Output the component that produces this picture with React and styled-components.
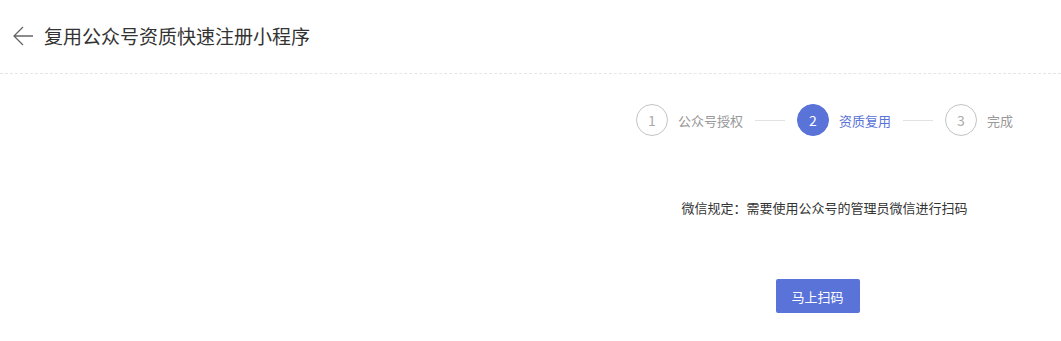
import React from "react";
import styled, { createGlobalStyle } from "styled-components";

const GlobalStyle = createGlobalStyle`
  html, body {
    margin: 0;
    padding: 0;
    background: #fff;
    font-family: "Noto Sans CJK SC", "Noto Sans", sans-serif;
  }
`;

const Page = styled.div`
  width: 1061px;
  height: 341px;
  overflow: hidden;
`;

const Header = styled.div`
  display: flex;
  align-items: center;
  height: 74px;
  padding-left: 11px;
  border-bottom: 1px dashed #e6e6e6;
  box-sizing: border-box;
  padding-bottom: 2px;
`;

const BackButton = styled.button`
  display: flex;
  align-items: center;
  justify-content: center;
  width: 24px;
  height: 24px;
  padding: 0;
  margin-right: 9px;
  border: none;
  background: none;
  cursor: pointer;
`;

const Title = styled.h1`
  margin: 0;
  font-size: 19px;
  font-weight: 400;
  color: #333;
`;

const Body = styled.div`
  display: flex;
`;

const LeftPane = styled.div`
  flex: 1;
`;

const RightPane = styled.div`
  width: 487px;
  display: flex;
  flex-direction: column;
  align-items: center;
`;

const Steps = styled.div`
  align-self: stretch;
  display: flex;
  align-items: center;
  justify-content: flex-end;
  padding: 30px 48px 0 0;
`;

const Step = styled.div`
  display: flex;
  align-items: center;
  gap: 10px;
`;

const Circle = styled.span`
  width: 32px;
  height: 32px;
  box-sizing: border-box;
  border-radius: 50%;
  display: flex;
  align-items: center;
  justify-content: center;
  font-size: 14px;
  border: 1px solid ${(p) => (p.$active ? "#5a73d8" : "#c4c4c4")};
  background: ${(p) => (p.$active ? "#5a73d8" : "#fff")};
  color: ${(p) => (p.$active ? "#fff" : "#aaa")};
`;

const StepLabel = styled.span`
  font-size: 13px;
  color: ${(p) => (p.$active ? "#5a73d8" : "#999")};
`;

const Connector = styled.span`
  width: 30px;
  height: 1px;
  background: #e2e2e2;
  margin: 0 12px;
`;

const Notice = styled.p`
  margin: 62px 0 0 14px;
  font-size: 13px;
  color: #333;
`;

const ScanButton = styled.button`
  margin-top: 62px;
  width: 84px;
  height: 34px;
  border: none;
  border-radius: 2px;
  background: #5a73d8;
  color: #fff;
  font-family: inherit;
  font-size: 13px;
  cursor: pointer;
`;

const steps = [
  { n: 1, label: "公众号授权" },
  { n: 2, label: "资质复用", active: true },
  { n: 3, label: "完成" },
];

export default function App() {
  return (
    <Page>
      <GlobalStyle />
      <Header>
        <BackButton aria-label="返回">
          <svg width="22" height="22" viewBox="0 0 22 22" fill="none" stroke="#666" strokeWidth="1.3">
            <path d="M21 11H2M11 2L2 11l9 9" />
          </svg>
        </BackButton>
        <Title>复用公众号资质快速注册小程序</Title>
      </Header>
      <Body>
        <LeftPane />
        <RightPane>
          <Steps>
            {steps.map((s, i) => (
              <React.Fragment key={s.n}>
                {i > 0 && <Connector />}
                <Step>
                  <Circle $active={s.active}>{s.n}</Circle>
                  <StepLabel $active={s.active}>{s.label}</StepLabel>
                </Step>
              </React.Fragment>
            ))}
          </Steps>
          <Notice>微信规定：需要使用公众号的管理员微信进行扫码</Notice>
          <ScanButton>马上扫码</ScanButton>
        </RightPane>
      </Body>
    </Page>
  );
}
